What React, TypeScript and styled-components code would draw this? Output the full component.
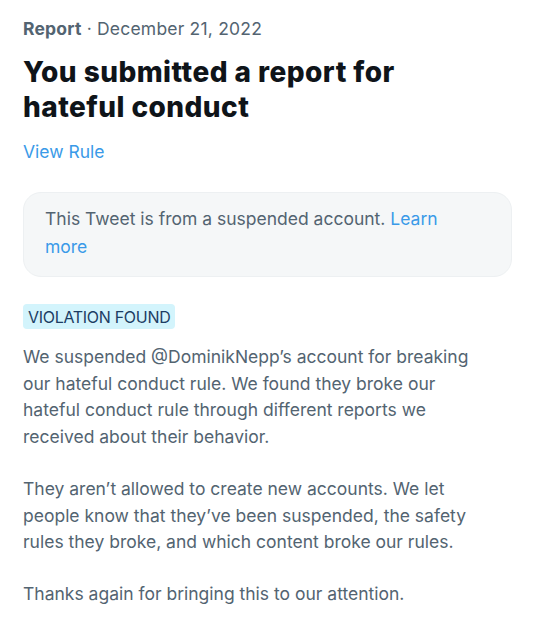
import React from "react";
import styled, { createGlobalStyle } from "styled-components";

const Global = createGlobalStyle`
  html, body { margin: 0; padding: 0; background: #ffffff; }
  body { font-family: Inter, "Noto Sans", "Liberation Sans", sans-serif; -webkit-font-smoothing: antialiased; }
`;

const Page = styled.main`
  width: 539px;
  box-sizing: border-box;
  padding: 17px 28px 0 23px;
  display: flex;
  flex-direction: column;
`;

const Meta = styled.div`
  font-size: 17.5px;
  line-height: 24px;
  color: #536471;
  letter-spacing: 0.2px;
`;

const MetaStrong = styled.span`
  font-weight: 700;
`;

const Title = styled.h1`
  margin: 14px 0 0;
  font-size: 28px;
  line-height: 35px;
  font-weight: 800;
  color: #0f1419;
  letter-spacing: 0.45px;
`;

const Link = styled.a`
  color: #3a9ae8;
  text-decoration: none;
`;

const RuleLink = styled(Link)`
  margin-top: 15px;
  font-size: 17.5px;
  line-height: 24px;
  align-self: flex-start;
`;

const Notice = styled.div`
  margin-top: 28px;
  box-sizing: border-box;
  width: 489px;
  padding: 12px 20px 15px 21px;
  background: #f5f7f8;
  border: 1px solid #edf0f2;
  border-radius: 18px;
  font-size: 17.5px;
  line-height: 28px;
  color: #536471;
`;

const Badge = styled.span`
  margin-top: 27px;
  align-self: flex-start;
  padding: 0 5px;
  height: 25px;
  display: inline-flex;
  align-items: center;
  background: #d3f4fc;
  border-radius: 4px;
  color: #1c3d64;
  font-size: 16px;
  letter-spacing: -0.3px;
  text-transform: uppercase;
`;

const Body = styled.div`
  margin-top: 15px;
  display: flex;
  flex-direction: column;
  gap: 25px;
  font-size: 17.5px;
  line-height: 26.7px;
  color: #536471;
`;

const Para = styled.p`
  margin: 0;
`;

export default function App() {
  return (
    <>
      <Global />
      <Page>
        <Meta>
          <MetaStrong>Report</MetaStrong> · December 21, 2022
        </Meta>
        <Title>
          You submitted a report for
          <br />
          hateful conduct
        </Title>
        <RuleLink href="#">View Rule</RuleLink>
        <Notice>
          This Tweet is from a suspended account. <Link href="#">Learn</Link>
          <br />
          <Link href="#">more</Link>
        </Notice>
        <Badge>Violation found</Badge>
        <Body>
          <Para>
            We suspended @DominikNepp’s account for breaking
            <br />
            our hateful conduct rule. We found they broke our
            <br />
            hateful conduct rule through different reports we
            <br />
            received about their behavior.
          </Para>
          <Para>
            They aren’t allowed to create new accounts. We let
            <br />
            people know that they’ve been suspended, the safety
            <br />
            rules they broke, and which content broke our rules.
          </Para>
          <Para>Thanks again for bringing this to our attention.</Para>
        </Body>
      </Page>
    </>
  );
}
